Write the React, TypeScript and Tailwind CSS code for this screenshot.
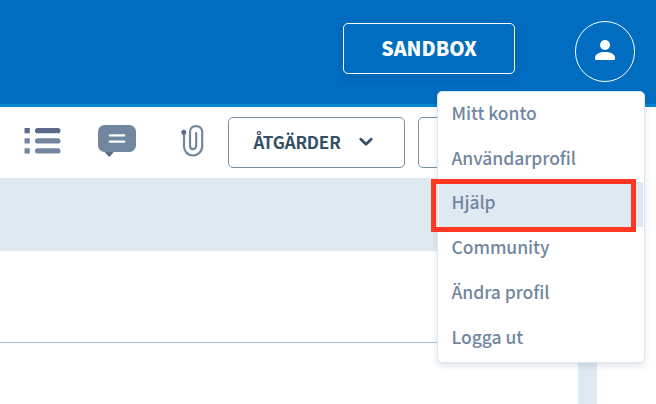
import React from 'react';

const menuItems = [
  { label: 'Mitt konto' },
  { label: 'Användarprofil' },
  { label: 'Hjälp', active: true },
  { label: 'Community' },
  { label: 'Ändra profil' },
  { label: 'Logga ut' },
];

function ListIcon() {
  return (
    <svg width="38" height="28" viewBox="0 0 38 28" className="shrink-0">
      <rect x="0.5" y="1" width="5.3" height="5.3" fill="#5a6a88" />
      <rect x="11" y="1" width="25.5" height="5.3" rx="2.6" fill="#5a6a88" />
      <rect x="0.5" y="11.2" width="5.3" height="5.3" fill="#71879f" />
      <rect x="11" y="11.2" width="25.5" height="5.3" rx="2.6" fill="#71879f" />
      <rect x="0.5" y="21.3" width="5.3" height="5.3" fill="#71879f" />
      <rect x="11" y="21.3" width="25.5" height="5.3" rx="2.6" fill="#71879f" />
    </svg>
  );
}

function CommentIcon() {
  return (
    <svg width="38" height="32" viewBox="0 0 38 32" className="shrink-0">
      <path d="M6 26H16.5L12.2 31.2Q11.2 32 10.3 31.2Z" fill="#5a6a88" />
      <rect x="0" y="0" width="38" height="27" rx="6.5" fill="#71879f" />
      <path d="M11.8 10.4H26.2M11.8 16.6H26.2" stroke="#fff" strokeWidth="2.3" strokeLinecap="round" />
    </svg>
  );
}

function ClipIcon() {
  return (
    <svg width="24" height="34" viewBox="0 0 24 34" className="shrink-0" fill="none">
      <path
        d="M3 9V22.5C3 27.5 7 31.5 12 31.5S21.2 27.5 21.2 22V8.2C21.2 4.2 18.4 2.1 15 2.1S9 4.2 9 8.2V21.5C9 23.7 10.3 25.2 12 25.2S15.2 23.7 15.2 21.5V9"
        stroke="#71879f"
        strokeWidth="2.2"
        strokeLinecap="round"
      />
      <circle cx="2.8" cy="8.3" r="2.5" fill="#5a6a88" />
    </svg>
  );
}

function UserMenu() {
  return (
    <div className="absolute left-[437px] top-[91px] h-[272px] w-[208px] rounded-[5px] border border-[#dce8f1] bg-white px-px pt-[0.5px] shadow-[0_3px_6px_rgba(45,75,105,0.15)]">
      {menuItems.map((item) => (
        <div
          key={item.label}
          className={`flex h-[44.75px] items-center pl-[12.5px] text-[17.5px] leading-[24px] font-medium text-[#71879f] ${item.active ? 'bg-[#dfe9f1]' : ''}`}
        >
          <span className="whitespace-nowrap pb-[4px] tracking-[-0.05px]">{item.label}</span>
        </div>
      ))}
    </div>
  );
}

export default function App() {
  return (
    <div className="relative flex h-[404px] w-[656px] flex-col overflow-hidden bg-white font-['Noto_Sans_CJK_SC','Noto_Sans',sans-serif]">
      <header className="flex h-[107px] shrink-0 items-start justify-end gap-[60px] border-b-[3px] border-[#0785cf] bg-[#006dc0] pt-[21px] pr-[21px]">
        <button className="mt-[2px] flex h-[51px] w-[172px] items-center justify-center rounded-[5px] border border-white pb-[2px] text-[19.5px] leading-[28px] font-black text-white shadow-[0_3px_8px_rgba(0,40,90,0.14)]">
          SANDBOX
        </button>
        <button className="flex h-[61px] w-[60px] items-center justify-center rounded-full border border-white pb-[3px]">
          <svg width="20" height="20" viewBox="0 0 20 20" fill="#fff">
            <circle cx="10" cy="5" r="5" />
            <path d="M0 17.5C0 13.8 5.5 12 10 12S20 13.8 20 17.5V18.5Q20 20 18.5 20H1.5Q0 20 0 18.5Z" />
          </svg>
        </button>
      </header>

      <div className="flex h-[71px] shrink-0 items-start pl-[24px]">
        <div className="mt-[20px]"><ListIcon /></div>
        <div className="mt-[18px] ml-[36px]"><CommentIcon /></div>
        <div className="mt-[17px] ml-[45px]"><ClipIcon /></div>
        <button className="mt-[10px] ml-[23px] flex h-[51px] w-[177px] shrink-0 items-center rounded-[5px] border border-[#778fa3] pb-[2px] pl-[24px] text-[17px] leading-[26px] font-bold text-[#344f67]">
          <span className="w-[88px] whitespace-nowrap tracking-[-0.15px]">ÅTGÄRDER</span>
          <svg width="14" height="10" viewBox="0 0 14 10" fill="none" className="ml-[18px]">
            <path d="M1.8 2.2L7 7.3L12.2 2.2" stroke="#344f67" strokeWidth="2.7" strokeLinecap="round" strokeLinejoin="round" />
          </svg>
        </button>
        <div className="mt-[10px] ml-[13px] h-[51px] w-[160px] shrink-0 rounded-[5px] border border-[#778fa3]" />
      </div>

      <div className="h-[73px] w-[597px] shrink-0 bg-[#dfe9f1]" />
      <div className="flex h-[153px] w-[597px] shrink-0">
        <div className="flex-1">
          <div className="h-[92px] border-b border-[#afc3d4]" />
        </div>
        <div className="w-[19px] bg-[#dfe9f1]" />
      </div>

      <UserMenu />
      <div className="absolute left-[431px] top-[179px] h-[53px] w-[205px] border-[5px] border-[#ff3823]" />
    </div>
  );
}
